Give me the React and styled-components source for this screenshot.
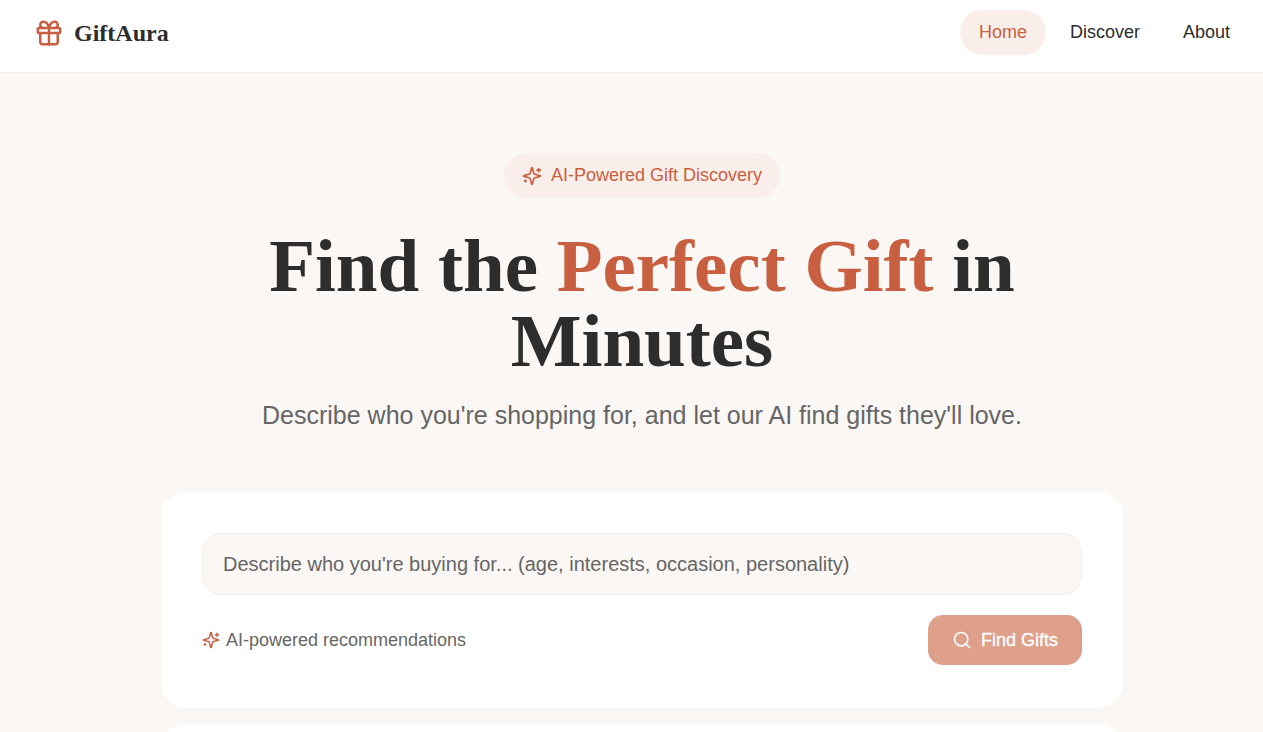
import React, { useState } from "react";
import styled, { createGlobalStyle } from "styled-components";
import { Gift, Search } from "lucide-react";

const Global = createGlobalStyle`
  * { box-sizing: border-box; }
  html { overflow: hidden; }
  body {
    margin: 0;
    background: #faf7f4;
    color: #2d2d2d;
    font-family: "Liberation Sans", Arial, sans-serif;
  }
  #root { height: 100vh; overflow: hidden; }
  svg { display: block; flex: none; }
`;

const Header = styled.header`
  display: flex;
  align-items: center;
  justify-content: space-between;
  padding: 10px 14px 17px 34px;
  background: #fff;
  border-bottom: 1px solid #f0eeec;
`;

const Logo = styled.a`
  display: flex;
  align-items: center;
  gap: 10px;
  color: #2d2d2d;
  font: bold 24px/30px "Liberation Serif", "Times New Roman", serif;
  text-decoration: none;
`;

const Nav = styled.nav`
  display: flex;
  gap: 5px;
`;

const NavLink = styled.a`
  padding: 10px 19px;
  border-radius: 24px;
  font-size: 18px;
  line-height: 25px;
  text-decoration: none;
  color: ${(p) => (p.$active ? "#c85f41" : "#2d2d2d")};
  background: ${(p) => (p.$active ? "#faeeeb" : "transparent")};
`;

const Main = styled.main`
  display: flex;
  flex-direction: column;
  align-items: center;
  padding: 80px 0 0 21px;
`;

const Badge = styled.div`
  display: flex;
  align-items: center;
  gap: 9px;
  padding: 10px 18px;
  border-radius: 24px;
  background: #faeeeb;
  color: #c85f41;
  font-size: 18px;
  line-height: 25px;
`;

const Title = styled.h1`
  max-width: 880px;
  margin: 30px 0 0;
  font: bold 75px/75px "Liberation Serif", "Times New Roman", serif;
  text-align: center;
`;

const Accent = styled.span`
  color: #c85f41;
`;

const Subtitle = styled.p`
  margin: 20px 0 0;
  color: #666;
  font-size: 25px;
  line-height: 35px;
  text-align: center;
`;

const Card = styled.form`
  width: 100%;
  max-width: 962px;
  margin-top: ${(p) => p.$top}px;
  padding: 41px 41px 43px;
  border-radius: 24px;
  background: #fff;
  box-shadow: 0 4px 20px rgba(45, 45, 45, 0.01);
`;

const Prompt = styled.input`
  display: block;
  width: 100%;
  height: 62px;
  padding: 0 20px;
  border: 1px solid #f0eeec;
  border-radius: 20px;
  background: #faf7f4;
  color: #2d2d2d;
  font: 20px "Liberation Sans", Arial, sans-serif;
  outline: none;
  &::placeholder { color: #666; opacity: 1; }
`;

const Actions = styled.div`
  display: flex;
  align-items: center;
  justify-content: space-between;
  margin-top: 20px;
`;

const Hint = styled.span`
  display: flex;
  align-items: center;
  gap: 6px;
  color: #666;
  font-size: 18px;
  line-height: 25px;
`;

const Submit = styled.button`
  display: flex;
  align-items: center;
  gap: 9px;
  height: 50px;
  padding: 0 24px;
  border: 0;
  border-radius: 15px;
  background: #de9f8b;
  color: #fff;
  font: 18px/25px "Liberation Sans", Arial, sans-serif;
  -webkit-text-stroke: 0.3px #fff;
`;

const accent = "#c85f41";

const Sparkles = ({ size }) => (
  <svg
    width={size}
    height={size}
    viewBox="0 0 24 24"
    fill="none"
    stroke={accent}
    strokeWidth="2"
    strokeLinecap="round"
    strokeLinejoin="round"
    aria-hidden="true"
  >
    <path d="M9.937 15.5A2 2 0 0 0 8.5 14.063l-6.135-1.582a.5.5 0 0 1 0-.962L8.5 9.936A2 2 0 0 0 9.937 8.5l1.582-6.135a.5.5 0 0 1 .963 0L14.063 8.5A2 2 0 0 0 15.5 9.937l6.135 1.581a.5.5 0 0 1 0 .964L15.5 14.063a2 2 0 0 0-1.437 1.437l-1.582 6.135a.5.5 0 0 1-.963 0z" />
    <path d="M20 3v4M22 5h-4M4 17v2M5 18H3" />
  </svg>
);

const links = ["Home", "Discover", "About"];

export default function App() {
  const [prompt, setPrompt] = useState("");
  return (
    <>
      <Global />
      <Header>
        <Logo href="#home">
          <Gift size={30} color={accent} />
          GiftAura
        </Logo>
        <Nav>
          {links.map((label, i) => (
            <NavLink key={label} href={`#${label.toLowerCase()}`} $active={i === 0}>
              {label}
            </NavLink>
          ))}
        </Nav>
      </Header>
      <Main>
        <Badge>
          <Sparkles size={20} />
          AI-Powered Gift Discovery
        </Badge>
        <Title>
          Find the <Accent>Perfect Gift</Accent> in Minutes
        </Title>
        <Subtitle>Describe who you're shopping for, and let our AI find gifts they'll love.</Subtitle>
        <Card $top={59} onSubmit={(e) => e.preventDefault()}>
          <Prompt
            aria-label="Gift recipient description"
            placeholder="Describe who you're buying for... (age, interests, occasion, personality)"
            value={prompt}
            onChange={(e) => setPrompt(e.target.value)}
          />
          <Actions>
            <Hint>
              <Sparkles size={18} />
              AI-powered recommendations
            </Hint>
            <Submit type="submit">
              <Search size={20} color="#fff" />
              Find Gifts
            </Submit>
          </Actions>
        </Card>
        <Card as="section" $top={16} />
      </Main>
    </>
  );
}
